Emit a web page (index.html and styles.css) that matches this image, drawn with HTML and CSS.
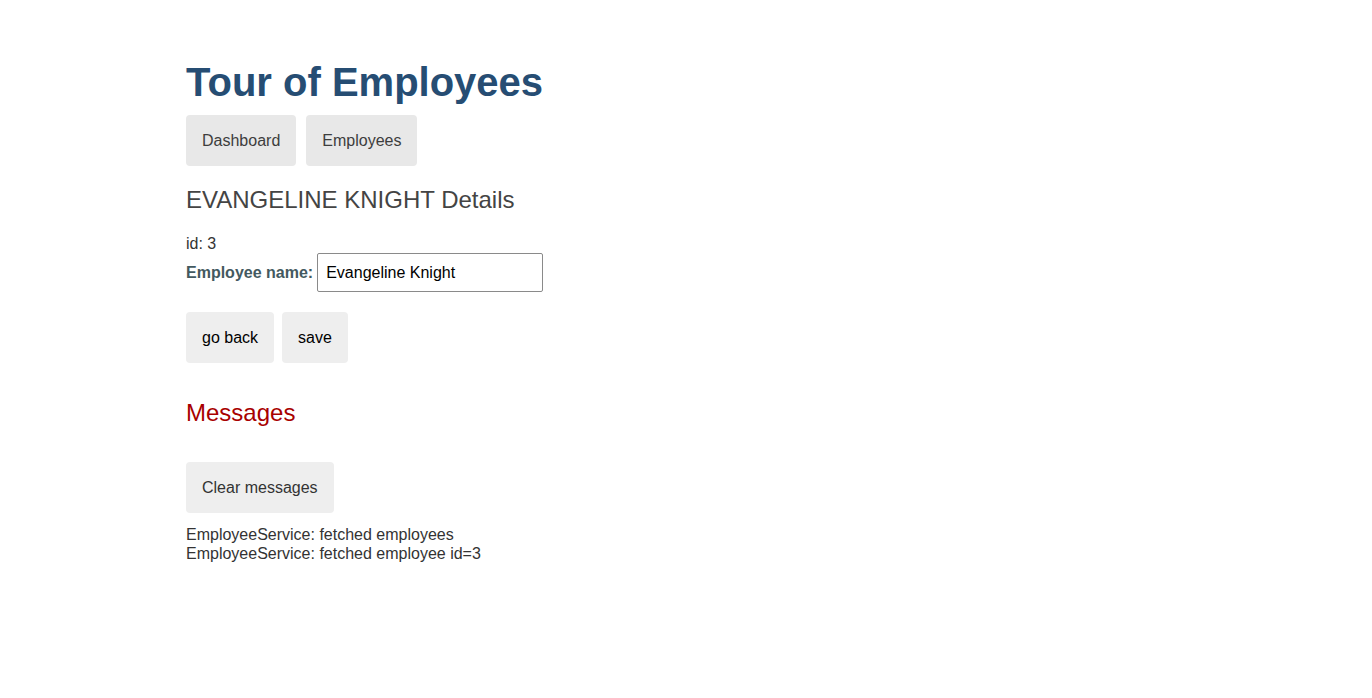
FILE: index.html
```html
<!DOCTYPE html>
<html lang="en">
<head>
<meta charset="utf-8">
<title>Tour of Employees</title>
<link rel="stylesheet" href="styles.css">
</head>
<body>
<div class="app">
  <h1 class="title">Tour of Employees</h1>
  <nav class="nav">
    <a class="nav-link" href="#">Dashboard</a>
    <a class="nav-link" href="#">Employees</a>
  </nav>
  <section class="detail">
    <h2 class="detail-title">EVANGELINE KNIGHT Details</h2>
    <div class="detail-id"><span>id: </span>3</div>
    <div class="detail-row">
      <label class="detail-label" for="emp-name">Employee name:</label>
      <input class="detail-input" id="emp-name" type="text" value="Evangeline Knight">
    </div>
    <div class="detail-actions">
      <button class="detail-btn" type="button">go back</button>
      <button class="detail-btn" type="button">save</button>
    </div>
  </section>
  <section class="messages">
    <h2 class="messages-title">Messages</h2>
    <button class="clear-btn" type="button">Clear messages</button>
    <div class="message">EmployeeService: fetched employees</div>
    <div class="message">EmployeeService: fetched employee id=3</div>
  </section>
</div>
</body>
</html>
```

FILE: styles.css
```css
* {
  font-family: "Liberation Sans", Arial, Helvetica, sans-serif;
}
html, body {
  margin: 0;
  padding: 0;
  background: #fff;
}
body {
  color: #333;
}
.app {
  padding: 59px 0 0 186px;
}
.title {
  margin: 0;
  color: #264D73;
  font-size: 40px;
  line-height: 46px;
  font-weight: bold;
}
.nav {
  display: flex;
  gap: 10px;
  margin-top: 10px;
}
.nav-link {
  display: block;
  padding: 16px;
  line-height: 19px;
  font-size: 16px;
  background-color: #e8e8e8;
  color: #3d3d3d;
  text-decoration: none;
  border-radius: 4px;
}
.detail-title,
.messages-title {
  margin: 0;
  font-size: 24px;
  line-height: 28px;
  font-weight: normal;
}
.detail-title {
  margin-top: 20px;
  color: #444;
}
.detail-id {
  margin-top: 21px;
  font-size: 16px;
  line-height: 18px;
}
.detail-row {
  display: flex;
  align-items: center;
  gap: 4px;
  margin-top: 0;
}
.detail-label {
  color: #435960;
  font-weight: bold;
  font-size: 16px;
}
.detail-input {
  box-sizing: border-box;
  width: 226px;
  height: 39px;
  padding: 0 8px;
  border: 1px solid #8a8a8a;
  border-radius: 2px;
  font-size: 16px;
  color: #000;
  background: #fff;
  margin: 0;
}
.detail-actions {
  display: flex;
  gap: 8px;
  margin-top: 20px;
}
.detail-btn,
.clear-btn {
  margin: 0;
  border: none;
  border-radius: 4px;
  background-color: #eee;
  padding: 16px;
  font-size: 16px;
  line-height: 19px;
  cursor: pointer;
}
.detail-btn {
  color: #000;
}
.messages-title {
  margin-top: 36px;
  color: #A80000;
}
.clear-btn {
  display: block;
  margin-top: 35px;
  margin-bottom: 12px;
  color: #333;
}
.message {
  font-size: 16px;
  line-height: 19px;
  color: #333;
}
```
